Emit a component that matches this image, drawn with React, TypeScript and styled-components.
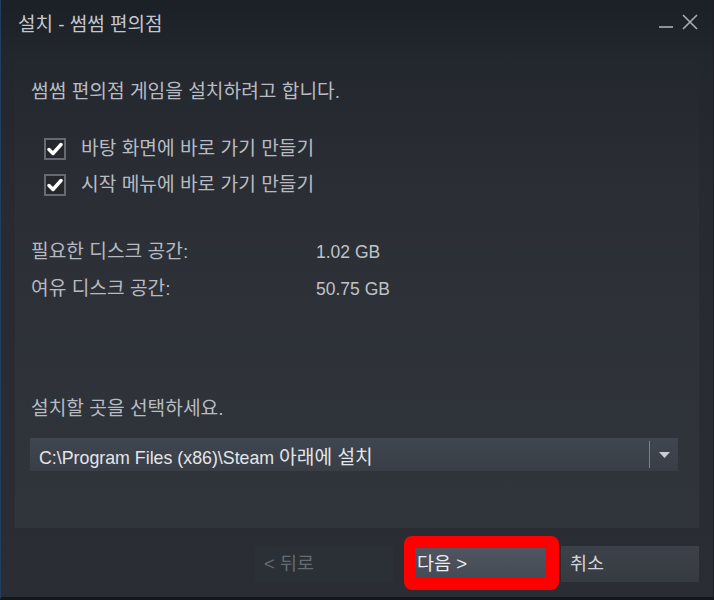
import React from "react";
import styled, { createGlobalStyle } from "styled-components";

const GlobalStyle = createGlobalStyle`
  html, body { margin: 0; padding: 0; background: #111316; }
  * { box-sizing: border-box; }
  body { font-family: "Liberation Sans", "Noto Sans CJK KR", sans-serif; }
`;

const Window = styled.div`
  width: 714px;
  height: 600px;
  display: flex;
  flex-direction: column;
  border-left: 1px solid #1f3e62;
  border-right: 1px solid #1b1e22;
  border-bottom: 3px solid #141619;
  background: linear-gradient(to bottom, #1b1f26 0px, #22262d 60px, #272a30 180px, #2a2d33 100%);
  font-family: "Liberation Sans", "Noto Sans CJK KR", sans-serif;
  font-size: 19.2px;
`;

const TitleBar = styled.div`
  height: 45px;
  flex: none;
  display: flex;
  align-items: center;
  justify-content: space-between;
  padding: 5px 15px 0 17px;
`;

const Title = styled.div`
  color: #c4c8ce;
  font-size: 19px;
  line-height: 24px;
`;

const Controls = styled.div`
  display: flex;
  align-items: center;
  gap: 9px;
  margin-top: -7px;
`;

const Panel = styled.div`
  margin: 0 14px;
  height: 483px;
  flex: none;
  display: flex;
  flex-direction: column;
  padding: 35px 21px 0 15px;
  background: linear-gradient(to bottom, rgba(50, 54, 62, 0) 0%, rgba(50, 54, 62, 0.45) 45%, #30343b 100%);
`;

const Intro = styled.div`
  color: #b8bcc2;
  line-height: 24px;
  padding-left: 1px;
`;

const CheckList = styled.div`
  margin-top: 32px;
  display: flex;
  flex-direction: column;
  gap: 10px;
  padding-left: 14px;
`;

const CheckRow = styled.label`
  display: flex;
  align-items: center;
  gap: 15px;
  height: 26px;
  color: #b8bcc2;
  line-height: 24px;
`;

const Box = styled.span`
  width: 22px;
  height: 22px;
  flex: none;
  border: 2px solid #676b71;
  background: #24272c;
  display: flex;
  align-items: center;
  justify-content: center;
`;

const InfoGrid = styled.div`
  margin-top: 42px;
  display: grid;
  grid-template-columns: 285px auto;
  row-gap: 13px;
  line-height: 24px;
  padding-left: 1px;
`;

const InfoLabel = styled.div`
  color: #b6bac0;
`;

const InfoValue = styled.div`
  color: #bfc3c9;
  font-size: 17.5px;
`;

const LocationLabel = styled.div`
  margin-top: 96px;
  color: #b8bcc2;
  line-height: 24px;
  padding-left: 1px;
`;

const Dropdown = styled.div`
  margin-top: 17px;
  height: 33px;
  display: flex;
  align-items: center;
  background: linear-gradient(to bottom, #40464f 0%, #393e46 100%);
`;

const DropdownText = styled.div`
  flex: 1;
  padding: 6px 0 0 9px;
  color: #e3e6ea;
  font-size: 17.8px;
  line-height: 24px;
  white-space: nowrap;
`;

const Hangul = styled.span`
  font-size: 19.2px;
`;

const Separator = styled.div`
  width: 1px;
  height: 27px;
  background: #7c8189;
`;

const Arrow = styled.div`
  width: 28px;
  display: flex;
  align-items: center;
  justify-content: center;
`;

const ButtonRow = styled.div`
  margin-top: 18px;
  display: flex;
  justify-content: flex-end;
  gap: 15px;
  padding-right: 14px;
`;

const Button = styled.div<{ $variant: "disabled" | "primary" | "normal" }>`
  position: relative;
  width: 138px;
  height: 36px;
  display: flex;
  align-items: center;
  padding-left: 9px;
  font-size: 18.5px;
  line-height: 24px;
  color: ${(p) =>
    p.$variant === "disabled" ? "#666b73" : p.$variant === "primary" ? "#eceef1" : "#d2d5da"};
  background: ${(p) =>
    p.$variant === "disabled"
      ? "#2b2f36"
      : p.$variant === "primary"
      ? "linear-gradient(to bottom, #4f5661 0%, #444a54 100%)"
      : "linear-gradient(to bottom, #3d424a 0%, #363a41 100%)"};
`;

const Highlight = styled.div`
  position: absolute;
  left: -4px;
  top: -10px;
  right: -13px;
  bottom: -8px;
  border-style: solid;
  border-color: #ff0000;
  border-width: 12px 13px 12px 11px;
  border-radius: 8px;
  pointer-events: none;
`;

const Check = () => (
  <svg width="16" height="14" viewBox="0 0 16 14">
    <path d="M2 7.5 L6 11.5 L14 2.5" fill="none" stroke="#ffffff" strokeWidth="3.4" strokeLinecap="round" strokeLinejoin="round" />
  </svg>
);

export default function App() {
  return (
    <>
      <GlobalStyle />
      <Window>
        <TitleBar>
          <Title>설치 - 썸썸 편의점</Title>
          <Controls>
            <svg width="14" height="16" viewBox="0 0 14 16">
              <rect x="0" y="12" width="14" height="2" fill="#8f9399" />
            </svg>
            <svg width="16" height="16" viewBox="0 0 16 16">
              <path d="M1 1 L15 15 M15 1 L1 15" stroke="#a9adb3" strokeWidth="1.6" fill="none" />
            </svg>
          </Controls>
        </TitleBar>
        <Panel>
          <Intro>썸썸 편의점 게임을 설치하려고 합니다.</Intro>
          <CheckList>
            <CheckRow>
              <Box>
                <Check />
              </Box>
              바탕 화면에 바로 가기 만들기
            </CheckRow>
            <CheckRow>
              <Box>
                <Check />
              </Box>
              시작 메뉴에 바로 가기 만들기
            </CheckRow>
          </CheckList>
          <InfoGrid>
            <InfoLabel>필요한 디스크 공간:</InfoLabel>
            <InfoValue>1.02 GB</InfoValue>
            <InfoLabel>여유 디스크 공간:</InfoLabel>
            <InfoValue>50.75 GB</InfoValue>
          </InfoGrid>
          <LocationLabel>설치할 곳을 선택하세요.</LocationLabel>
          <Dropdown>
            <DropdownText>
              C:\Program Files (x86)\Steam <Hangul>아래에 설치</Hangul>
            </DropdownText>
            <Separator />
            <Arrow>
              <svg width="11" height="6" viewBox="0 0 11 6">
                <path d="M0 0 L11 0 L5.5 6 Z" fill="#c9cdd2" />
              </svg>
            </Arrow>
          </Dropdown>
        </Panel>
        <ButtonRow>
          <Button $variant="disabled">&lt; 뒤로</Button>
          <Button $variant="primary">
            다음 &gt;
            <Highlight />
          </Button>
          <Button $variant="normal">취소</Button>
        </ButtonRow>
      </Window>
    </>
  );
}
